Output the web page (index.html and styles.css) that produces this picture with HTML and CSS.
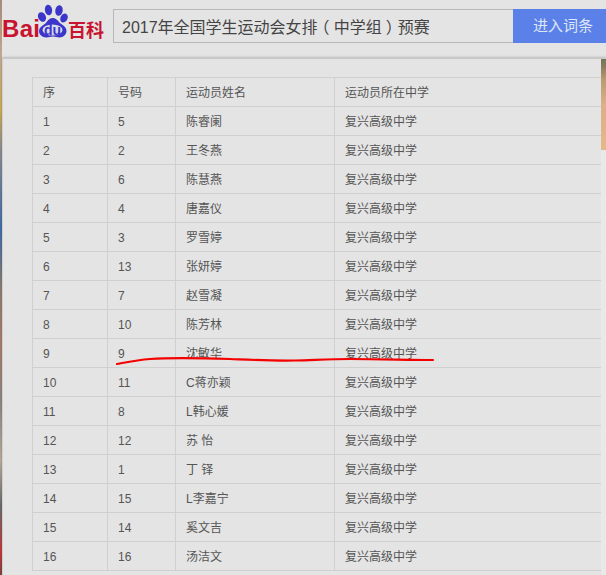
FILE: index.html
```html
<!DOCTYPE html>
<html lang="zh">
<head>
<meta charset="utf-8">
<title>百度百科</title>
<link rel="stylesheet" href="styles.css">
</head>
<body>
<div class="page">
  <div class="edge"></div>
  <div class="main">
    <header class="header">
      <div class="logo">
        <span class="logo-bai">Bai</span>
        <svg class="logo-paw" width="31" height="34" viewBox="0 0 31 34">
          <ellipse cx="5" cy="13" rx="3.800" ry="5" transform="rotate(-28 5 13)" fill="#3b36c9"/>
          <ellipse cx="11.500" cy="6" rx="3.600" ry="5.400" transform="rotate(-10 11.500 6)" fill="#3b36c9"/>
          <ellipse cx="22" cy="6.500" rx="3.700" ry="5.400" transform="rotate(10 22 6.500)" fill="#3b36c9"/>
          <ellipse cx="27" cy="14" rx="3.500" ry="4.800" transform="rotate(25 27 14)" fill="#3b36c9"/>
          <path d="M16 14c4 0 5 4 9 6.500 3 2 4.500 4 4.500 6.500 0 3.500-3 6.500-7 6.500-2 0-4.500-1-6.500-1s-4.500 1-6.500 1c-4.500 0-7.500-3-7.500-6.500 0-3 2-4.500 5-6.500s4.500-6.500 8.500-6.500z" fill="#3b36c9"/>
          <ellipse cx="15.500" cy="26" rx="10" ry="5.600" fill="#d8daec"/>
          <text class="logo-du" x="15.500" y="31" text-anchor="middle">du</text>
        </svg>
        <span class="logo-ke">百科</span>
      </div>
      <div class="search">
        <div class="search-input">2017年全国学生运动会女排<span class="paren">（</span>中学组<span class="paren">）</span>预赛</div>
        <div class="search-btn">进入词条</div>
      </div>
    </header>
    <div class="panel">
      <div class="panel-body">
        <table class="roster">
          <colgroup>
            <col class="c1"><col class="c2"><col class="c3"><col class="c4">
          </colgroup>
          <tbody>
            <tr><td>序</td><td>号码</td><td>运动员姓名</td><td>运动员所在中学</td></tr>
            <tr><td>1</td><td>5</td><td>陈睿阑</td><td>复兴高级中学</td></tr>
            <tr><td>2</td><td>2</td><td>王冬燕</td><td>复兴高级中学</td></tr>
            <tr><td>3</td><td>6</td><td>陈慧燕</td><td>复兴高级中学</td></tr>
            <tr><td>4</td><td>4</td><td>唐嘉仪</td><td>复兴高级中学</td></tr>
            <tr><td>5</td><td>3</td><td>罗雪婷</td><td>复兴高级中学</td></tr>
            <tr><td>6</td><td>13</td><td>张妍婷</td><td>复兴高级中学</td></tr>
            <tr><td>7</td><td>7</td><td>赵雪凝</td><td>复兴高级中学</td></tr>
            <tr><td>8</td><td>10</td><td>陈芳林</td><td>复兴高级中学</td></tr>
            <tr><td>9</td><td>9</td><td>沈敏华</td><td>复兴高级中学</td></tr>
            <tr><td>10</td><td>11</td><td>C蒋亦颖</td><td>复兴高级中学</td></tr>
            <tr><td>11</td><td>8</td><td>L韩心媛</td><td>复兴高级中学</td></tr>
            <tr><td>12</td><td>12</td><td>苏 怡</td><td>复兴高级中学</td></tr>
            <tr><td>13</td><td>1</td><td>丁 铎</td><td>复兴高级中学</td></tr>
            <tr><td>14</td><td>15</td><td>L李嘉宁</td><td>复兴高级中学</td></tr>
            <tr><td>15</td><td>14</td><td>奚文吉</td><td>复兴高级中学</td></tr>
            <tr><td>16</td><td>16</td><td>汤洁文</td><td>复兴高级中学</td></tr>
          </tbody>
        </table>
      </div>
      <aside class="side"><div class="side-img"></div></aside>
    </div>
  </div>
  <svg class="scribble" width="606" height="575" viewBox="0 0 606 575">
    <path d="M117 364C128 362 138 360 150 359C170 357.500 200 358 230 359C255 360 275 361 295 360.500C315 360 330 359 350 359C380 359 410 360 433 360" fill="none" stroke="#f40000" stroke-width="2.200" stroke-linecap="round"/>
  </svg>
</div>
</body>
</html>
```

FILE: styles.css
```css
* { box-sizing: border-box; }
html, body { margin: 0; padding: 0; }
body {
  background: #e4e4e4;
  color: #555;
  font-family: "Liberation Sans", "Noto Sans CJK SC", sans-serif;
}
.page {
  position: relative;
  display: flex;
  width: 606px;
  height: 575px;
  overflow: hidden;
}
.edge {
  width: 2px;
  flex: none;
  background: linear-gradient(180deg, #a8887c 0%, #c0a890 10%, #c8a850 19%, #8a8a90 26%, #3f6aa8 40%, #8a7a70 50%, #a87a68 60%, #8a8580 70%, #b8a898 80%, #6a6a6a 88%, #c03838 96%, #804040 100%);
}
.main {
  flex: 1;
  display: flex;
  flex-direction: column;
  min-width: 0;
}
.header {
  display: flex;
  height: 58px;
  flex: none;
  padding-top: 9px;
}
.logo {
  display: flex;
  width: 111px;
  height: 34px;
  flex: none;
  color: #c8142f;
  font-weight: 700;
}
.logo-bai {
  font-size: 24px;
  line-height: 24px;
  margin-top: 8px;
  width: 34px;
  letter-spacing: 0.300px;
}
.logo-paw {
  margin-top: -5px;
  flex: none;
  width: 31px;
  height: 34px;
  margin-left: 1px;
}
.logo-du {
  fill: #3b36c9;
  font-size: 14px;
  font-weight: 700;
}
.logo-ke {
  font-size: 18px;
  line-height: 18px;
  margin-top: 13px;
  white-space: nowrap;
}
.search {
  display: flex;
  flex: 1;
  height: 34px;
}
.search-input {
  width: 400px;
  flex: none;
  border: 1px solid #b8b8b8;
  border-right: 0;
  padding-left: 8px;
  font-size: 16px;
  line-height: 35px;
  color: #444;
  white-space: nowrap;
}
.paren {
  display: inline-block;
  font-feature-settings: "halt";
  padding: 0 4px;
}
.search-btn {
  flex: 1;
  background: #5b81e8;
  color: #dfe6f5;
  font-size: 15px;
  line-height: 34px;
  padding-left: 20px;
  white-space: nowrap;
}
.panel {
  flex: 1;
  display: flex;
  border-left: 1px solid #d0d0d0;
  border-top: 1px solid #c8c8c8;
  box-shadow: 0 -1px 2px rgba(0, 0, 0, 0.18);
  min-height: 0;
}
.panel-body {
  width: 598px;
  flex: none;
  padding: 18px 0 0 29px;
}
.roster {
  border-collapse: collapse;
  table-layout: fixed;
  width: 569px;
  font-size: 12px;
  line-height: 16px;
}
.c1 { width: 75px; }
.c2 { width: 68px; }
.c3 { width: 159px; }
.c4 { width: 267px; }
.roster td {
  border: 1px solid #d0d0d0;
  height: 29px;
  padding: 2px 10px 0;
  white-space: nowrap;
}
.side {
  flex: 1;
  background: #e9e9e9;
}
.side-img {
  height: 91px;
  background: linear-gradient(180deg, #6f7a58 0%, #8a7a60 8%, #b89a70 22%, #dcb088 50%, #e4b888 100%);
}
.scribble {
  position: absolute;
  left: 0;
  top: 0;
  pointer-events: none;
}
```
